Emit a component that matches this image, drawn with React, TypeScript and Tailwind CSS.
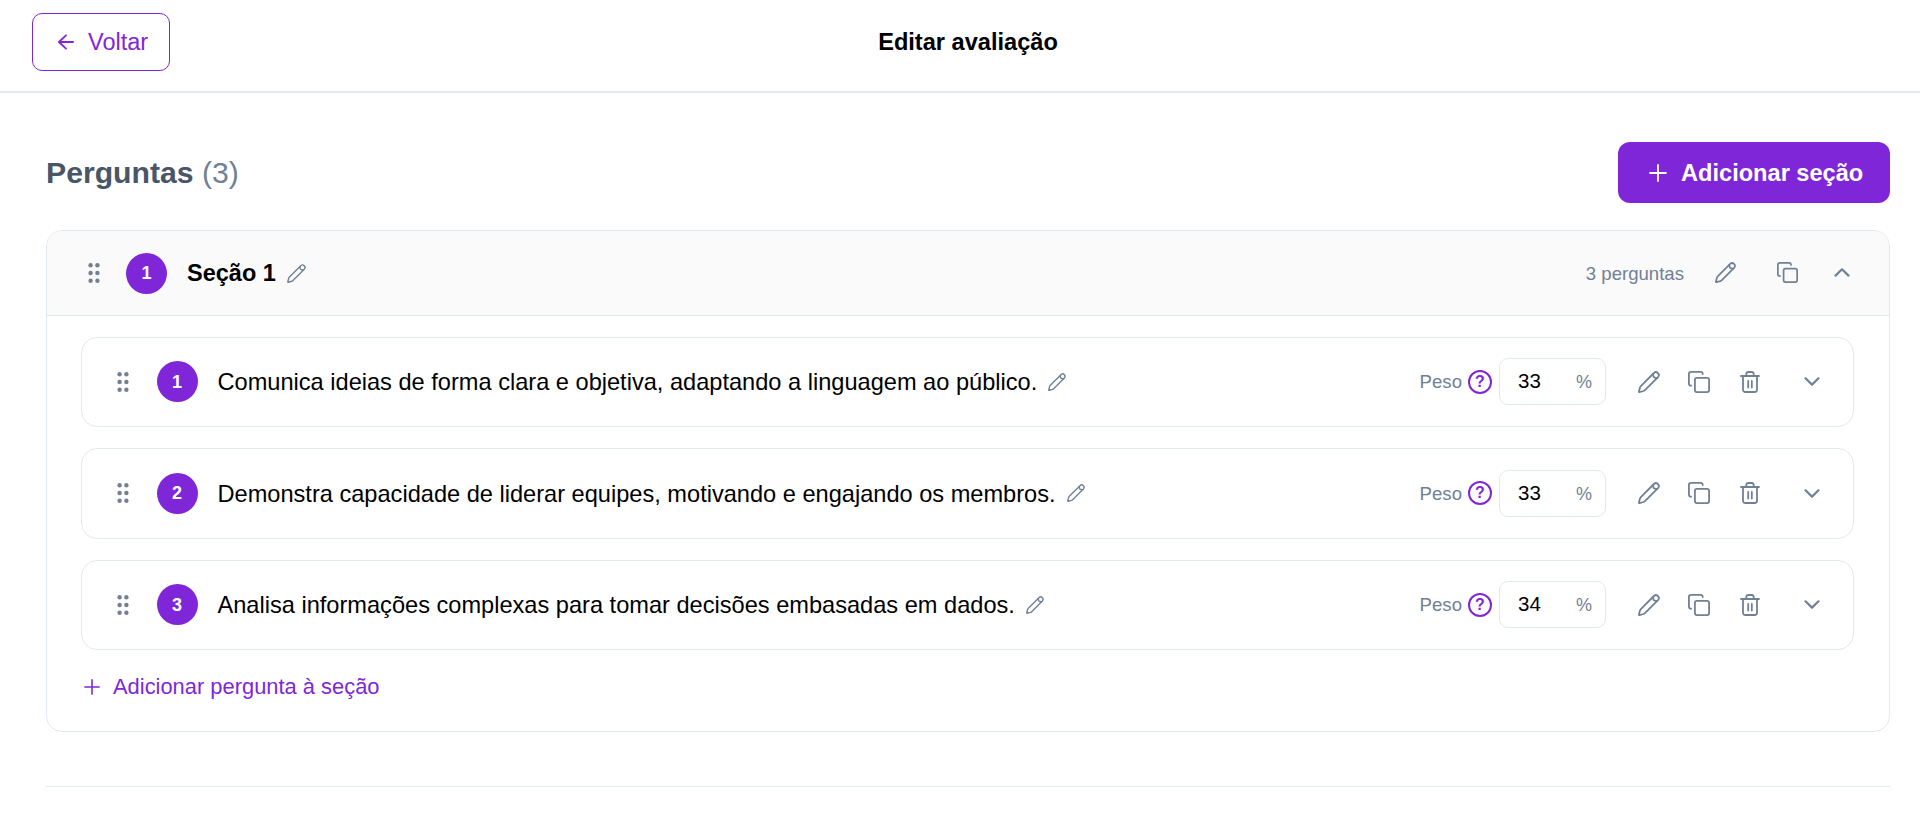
import React, { useState } from "react";

type IconProps = { className?: string };

function PencilIcon({ className }: IconProps) {
  return (
    <svg className={className} viewBox="0 0 22 22" fill="none" stroke="currentColor" strokeLinecap="round" strokeLinejoin="round">
      <path d="M15.9 2a2.9 2.9 0 0 1 4.1 4.1L7.2 18.9a4.5 4.5 0 0 1-1.7 1.1L1.4 21.1a.4.4 0 0 1-.5-.5L2 16.5a4.500 4.500 0 0 1 1.100-1.700z" />
      <path d="M15 3l.3 2.2a1.800 1.800 0 0 0 1.500 1.500L19 7" />
    </svg>
  );
}

function CopyIcon({ className }: IconProps) {
  return (
    <svg className={className} viewBox="0 0 22 22" fill="none" stroke="currentColor" strokeWidth="1.8" strokeLinecap="round" strokeLinejoin="round">
      <rect x="6.9" y="6.900" width="14.200" height="14.200" rx="2" />
      <path d="M3.1 14.7c-1.3 0-2.2-1-2.2-2.200V3.100c0-1.200 1-2.200 2.200-2.200h9.400c1.300 0 2.200.9 2.200 2.200" />
    </svg>
  );
}

function TrashIcon({ className }: IconProps) {
  return (
    <svg className={className} viewBox="0 0 20 22" fill="none" stroke="currentColor" strokeWidth="1.8" strokeLinecap="round" strokeLinejoin="round">
      <path d="M1 5h18M3 5v13.8a2.2 2.2 0 0 0 2.2 2.2h9.6a2.2 2.2 0 0 0 2.2-2.2V5M6.3 5V3.2A2.2 2.2 0 0 1 8.500 1h3a2.200 2.200 0 0 1 2.200 2.200V5" />
      <path d="M8.2 10v6.500M11.800 10v6.500" />
    </svg>
  );
}

function Chevron({ up = false }: { up?: boolean }) {
  return (
    <svg className="h-[9px] w-4 shrink-0 text-[#718096]" viewBox="0 0 16 9" fill="none" stroke="currentColor" strokeWidth="2.2" strokeLinecap="round" strokeLinejoin="round">
      <path d={up ? "M1.5 7.6L8 1.3l6.5 6.3" : "M1.5 1.3L8 7.6l6.5-6.3"} />
    </svg>
  );
}

function PlusIcon({ className }: IconProps) {
  return (
    <svg className={className} viewBox="0 0 18 18" fill="none" stroke="currentColor" strokeWidth="1.8" strokeLinecap="round">
      <path d="M9 1v16M1 9h16" />
    </svg>
  );
}

function DragHandle() {
  return (
    <svg className="h-5 w-3 shrink-0 text-[#718096]" viewBox="0 0 12 20" fill="currentColor">
      {[2.2, 10, 17.8].map((y) => (
        <g key={y}>
          <circle cx="2.6" cy={y} r="2.2" />
          <circle cx="9.4" cy={y} r="2.2" />
        </g>
      ))}
    </svg>
  );
}

function NumberBadge({ value }: { value: number }) {
  return (
    <span className="flex size-[41px] shrink-0 items-center justify-center rounded-full bg-[#7f27d8] text-lg font-bold text-white">
      {value}
    </span>
  );
}

type Question = { id: number; text: string; weight: number };

function QuestionRow({ question }: { question: Question }) {
  const [weight, setWeight] = useState(String(question.weight));

  return (
    <div className="flex h-[90.5px] items-center rounded-2xl border-[1.5px] border-[#e2e8f0] pr-[33px] pl-[35px]">
      <DragHandle />
      <div className="ml-[27.5px]">
        <NumberBadge value={question.id} />
      </div>
      <span className="ml-5 pt-0.5 text-[23.6px] whitespace-nowrap text-black">{question.text}</span>
      <PencilIcon className="ml-[11px] size-[18px] shrink-0 stroke-[1.7] text-[#718096]" />
      <div className="ml-auto flex items-center">
        <span className="pt-px text-[18.6px] text-[#718096]">Peso</span>
        <span className="ml-1.5 flex size-6 items-center justify-center rounded-full border-2 border-[#7f27d8] text-base leading-none font-bold text-[#7f27d8]">
          ?
        </span>
        <label className="ml-[7px] flex h-[47px] w-[107px] items-center rounded-[9px] border-[1.5px] border-[#e2e8f0] pr-[13px] pl-[18px]">
          <input
            className="w-12 text-[20.5px] text-black outline-none"
            value={weight}
            onChange={(e) => setWeight(e.target.value)}
          />
          <span className="ml-auto pt-px text-lg text-[#718096]">%</span>
        </label>
        <PencilIcon className="ml-8 size-[22px] stroke-[1.8] text-[#718096]" />
        <CopyIcon className="ml-[28px] size-[22px] text-[#718096]" />
        <TrashIcon className="ml-[30px] h-[22px] w-5 text-[#718096]" />
        <div className="ml-[44px] flex">
          <Chevron />
        </div>
      </div>
    </div>
  );
}

const questions: Question[] = [
  { id: 1, text: "Comunica ideias de forma clara e objetiva, adaptando a linguagem ao público.", weight: 33 },
  { id: 2, text: "Demonstra capacidade de liderar equipes, motivando e engajando os membros.", weight: 33 },
  { id: 3, text: "Analisa informações complexas para tomar decisões embasadas em dados.", weight: 34 },
];

export default function App() {
  return (
    <div className="h-[813px] overflow-hidden bg-white font-['Liberation_Sans',Arial,sans-serif]">
      <header className="grid h-[93px] grid-cols-[1fr_auto_1fr] items-start border-b-2 border-[#e5eaf1] pt-[13px] pr-4 pl-8">
        <button className="flex h-[58px] w-[138px] items-center rounded-[10px] border-[1.5px] border-[#7f27d8] pl-[25px] text-[#7f27d8]">
          <svg className="h-4 w-4" viewBox="0 0 17 16" fill="none" stroke="currentColor" strokeWidth="1.9" strokeLinecap="round" strokeLinejoin="round">
            <path d="M16 8H1M8.5 .9L1 8l7.5 7.1" />
          </svg>
          <span className="ml-3.5 pt-0.5 text-[23.5px]">Voltar</span>
        </button>
        <h1 className="flex h-[58px] items-center pt-0.5 text-[23.6px] font-bold text-black">Editar avaliação</h1>
      </header>

      <main className="pt-[49px] pr-[30px] pl-[46px]">
        <div className="flex h-[61px] items-center justify-between">
          <h2 className="text-[30.2px] font-bold text-[#4a5568]">
            Perguntas <span className="font-normal text-[#718096]">(3)</span>
          </h2>
          <button className="flex h-[61px] w-[272px] items-center rounded-xl bg-[#7f27d8] pl-[31px] text-white">
            <PlusIcon className="size-[18px]" />
            <span className="ml-3.5 pt-0.5 text-[23.6px] font-bold whitespace-nowrap">Adicionar seção</span>
          </button>
        </div>

        <section className="mt-[27px] h-[502px] overflow-hidden rounded-2xl border-[1.5px] border-[#e2e8f0]">
          <div className="flex h-[85px] items-center border-b-[1.5px] border-[#e2e8f0] bg-[#fafafa] pr-[39px] pl-[41px]">
            <DragHandle />
            <div className="ml-[26px]">
              <NumberBadge value={1} />
            </div>
            <h3 className="ml-5 pt-0.5 text-[23.5px] font-bold text-black">Seção 1</h3>
            <PencilIcon className="ml-[11px] size-[19px] stroke-[1.6] text-[#718096]" />
            <div className="ml-auto flex items-center text-[#718096]">
              <span className="pt-px text-[18.6px]">3 perguntas</span>
              <PencilIcon className="ml-[31px] size-[21px] stroke-[1.8]" />
              <CopyIcon className="ml-[41px] size-[21px]" />
              <div className="ml-9 flex">
                <Chevron up />
              </div>
            </div>
          </div>

          <div className="pt-[20.5px] pr-[35px] pl-[34px]">
            <div className="flex flex-col gap-[21px]">
              {questions.map((question) => (
                <QuestionRow key={question.id} question={question} />
              ))}
            </div>
            <button className="mt-[25px] flex items-center pl-[3px] text-[#7f27d8]">
              <PlusIcon className="size-4" />
              <span className="ml-[13px] text-[21.9px] leading-6">Adicionar pergunta à seção</span>
            </button>
          </div>
        </section>

        <hr className="mt-[54px] border-t-[1.5px] border-[#e2e8f0]" />
      </main>
    </div>
  );
}
